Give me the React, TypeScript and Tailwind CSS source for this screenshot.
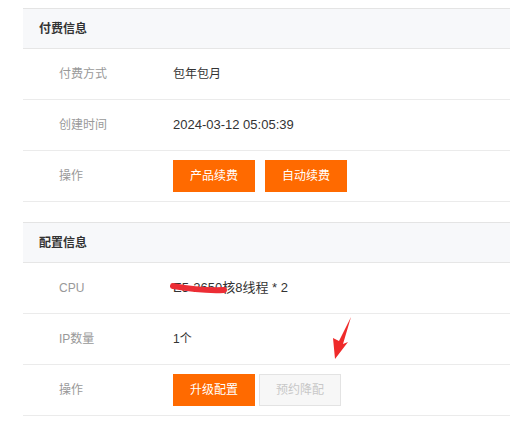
const font = "font-['Liberation_Sans','Noto_Sans_CJK_SC',sans-serif]";

function Section({ title, children }: { title: string; children: React.ReactNode }) {
  return (
    <div className="border-t border-[#e4e4e4]">
      <div className="flex h-10 items-center border-b border-[#e6e6e6] bg-[#f7f8fa] pl-4 text-[12px] font-bold text-[#333]">
        {title}
      </div>
      {children}
    </div>
  );
}

function Row({ label, children }: { label: string; children: React.ReactNode }) {
  return (
    <div className="flex h-[51px] items-center border-b border-[#ebebeb]">
      <div className="w-[150px] pl-9 text-[12px] text-[#999]">{label}</div>
      <div className="flex items-center text-[12px] text-[#333]">{children}</div>
    </div>
  );
}

function OrangeButton({ text }: { text: string }) {
  return (
    <button
      type="button"
      className="h-8 w-[82px] bg-[#ff6a00] text-[12px] text-white"
    >
      {text}
    </button>
  );
}

export default function App() {
  return (
    <div className={`relative h-[435px] w-[510px] overflow-hidden bg-white pl-[23px] pt-2 ${font}`}>
      <Section title="付费信息">
        <Row label="付费方式">包年包月</Row>
        <Row label="创建时间">
          <span className="text-[13px]">2024-03-12 05:05:39</span>
        </Row>
        <Row label="操作">
          <div className="flex gap-[10px]">
            <OrangeButton text="产品续费" />
            <OrangeButton text="自动续费" />
          </div>
        </Row>
      </Section>

      <div className="mt-5">
        <Section title="配置信息">
          <Row label="CPU">
            <span className="relative text-[13px]">
              E5-2650核8线程 * 2
              {/* red marker scribble hiding the model */}
              <svg className="absolute left-[-3px] top-[4px]" width="58" height="14" viewBox="0 0 58 14">
                <path d="M3 4 C 14 6, 30 9, 54 8" stroke="#ec2d35" strokeWidth="6" strokeLinecap="round" fill="none" />
              </svg>
            </span>
          </Row>
          <Row label="IP数量">1个</Row>
          <Row label="操作">
            <div className="flex gap-1">
              <OrangeButton text="升级配置" />
              <button
                type="button"
                className="h-8 w-[82px] border border-[#e3e3e3] bg-[#f7f7f7] text-[12px] text-[#c8c8c8]"
              >
                预约降配
              </button>
            </div>
          </Row>
        </Section>
      </div>

      <svg className="absolute left-[330px] top-[315px]" width="24" height="46" viewBox="330 315 24 46">
        <polygon points="351,317 343,344 348,342 335,359 333,338 339,341" fill="#ef2a2a" />
      </svg>
    </div>
  );
}
